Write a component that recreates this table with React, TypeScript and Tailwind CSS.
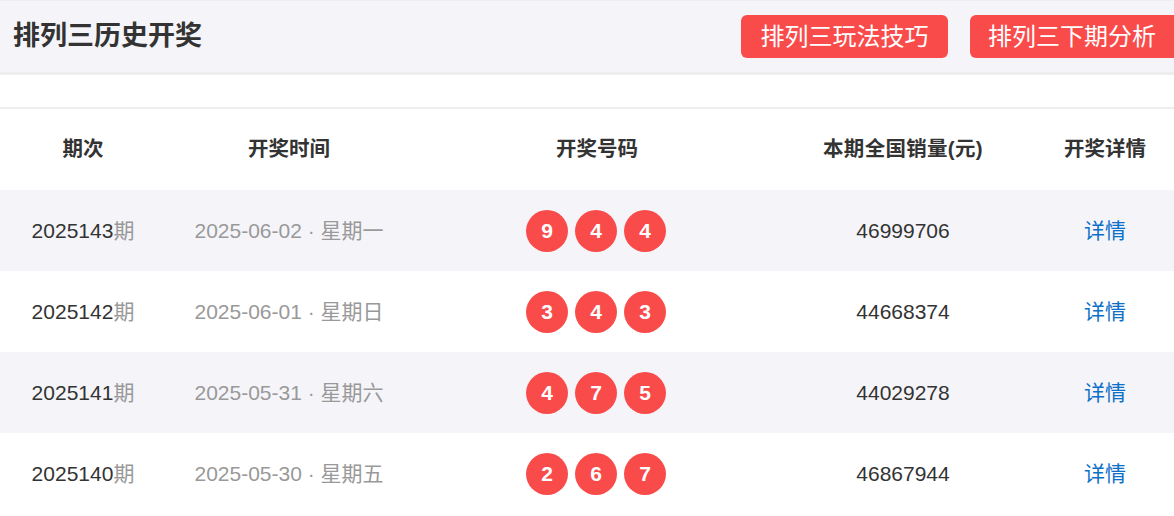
const rows = [
  { issue: '2025143', date: '2025-06-02', week: '星期一', balls: [9, 4, 4], sales: '46999706' },
  { issue: '2025142', date: '2025-06-01', week: '星期日', balls: [3, 4, 3], sales: '44668374' },
  { issue: '2025141', date: '2025-05-31', week: '星期六', balls: [4, 7, 5], sales: '44029278' },
  { issue: '2025140', date: '2025-05-30', week: '星期五', balls: [2, 6, 7], sales: '46867944' },
];

const cols = 'grid grid-cols-[166px_246px_372px_238px_166px]';

export default function App() {
  return (
    <div
      className="w-[1174px] h-[516px] overflow-hidden bg-white text-[#333]"
      style={{ fontFamily: 'Arial, "Liberation Sans", "Noto Sans CJK SC", sans-serif' }}
    >
      <div className="w-[1188px]">
        <header className="flex h-[75px] items-center justify-between border-t border-b-[3px] border-[#eeeeee] bg-[#f5f5f9] pl-[13px]">
          <h1 className="text-[27px] font-bold leading-none text-[#333]">排列三历史开奖</h1>
          <div className="flex gap-[22px]">
            <button className="h-[43px] w-[207px] rounded-[6px] bg-[#fa4b4b] text-[24px] text-white">
              排列三玩法技巧
            </button>
            <button className="h-[43px] w-[218px] rounded-l-[6px] bg-[#fa4b4b] pr-[14px] text-[24px] text-white">
              排列三下期分析
            </button>
          </div>
        </header>

        <div className="h-[34px] border-b-2 border-[#eeeeee]" />

        <div className={`${cols} h-[81px] items-center text-center text-[20.5px] font-bold text-[#333]`}>
          <div>期次</div>
          <div>开奖时间</div>
          <div className="pr-[2px]">开奖号码</div>
          <div className="tracking-[0.3px]">本期全国销量(元)</div>
          <div>开奖详情</div>
        </div>

        {rows.map((r, i) => (
          <div
            key={r.issue}
            className={`${cols} h-[81px] items-center text-center text-[21px] ${i % 2 === 0 ? 'bg-[#f5f5f9]' : 'bg-white'}`}
          >
            <div>
              <span className="text-[#333]">{r.issue}</span>
              <span className="text-[#999]">期</span>
            </div>
            <div className="text-[#999]">
              {r.date} · {r.week}
            </div>
            <div className="flex justify-center gap-[7px] pr-[4px]">
              {r.balls.map((b, j) => (
                <span
                  key={j}
                  className="flex h-[42px] w-[42px] items-center justify-center rounded-full bg-[#fa4b4b] text-[21px] font-bold text-white"
                >
                  {b}
                </span>
              ))}
            </div>
            <div className="text-[#333]">{r.sales}</div>
            <div className="text-[#0c6fc8]">详情</div>
          </div>
        ))}
      </div>
    </div>
  );
}
